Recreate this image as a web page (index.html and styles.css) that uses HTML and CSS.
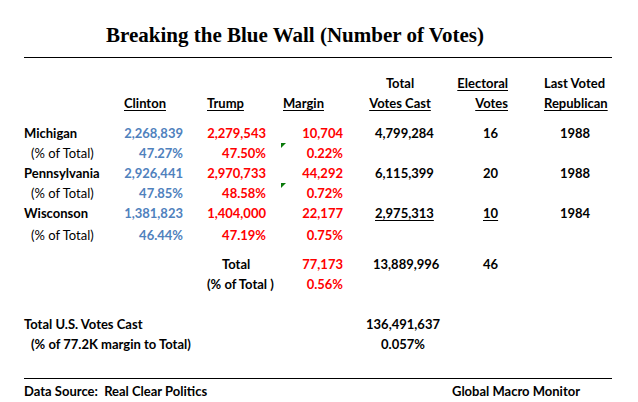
FILE: index.html
```html
<!DOCTYPE html>
<html lang="en">
<head>
<meta charset="utf-8">
<title>Breaking the Blue Wall</title>
<link rel="stylesheet" href="styles.css">
</head>
<body>
<div class="page">
  <h1 class="title">Breaking the Blue Wall (Number of Votes)</h1>
  <div class="rule rule-top"></div>

  <div class="row head1">
    <span class="e hc">Total</span>
    <span class="f hr"><u>Electoral</u></span>
    <span class="g hl">Last Voted</span>
  </div>
  <div class="row head2">
    <span class="b hb"><u>Clinton</u></span>
    <span class="c hc3"><u>Trump</u></span>
    <span class="d hd"><u>Margin</u></span>
    <span class="e hc"><u>Votes Cast</u></span>
    <span class="f hr"><u>Votes</u></span>
    <span class="g hl"><u>Republican</u></span>
  </div>

  <div class="row first">
    <span class="a">Michigan</span>
    <span class="b num blue">2,268,839</span>
    <span class="c num red">2,279,543</span>
    <span class="d num red">10,704</span>
    <span class="e vl">4,799,284</span>
    <span class="f vev">16</span>
    <span class="g vy">1988</span>
  </div>
  <div class="row">
    <span class="a sub reg">(% of Total)</span>
    <span class="b num blue">47.27%</span>
    <span class="c num red">47.50%</span>
    <span class="d num red flag">0.22%</span>
  </div>
  <div class="row">
    <span class="a">Pennsylvania</span>
    <span class="b num blue">2,926,441</span>
    <span class="c num red">2,970,733</span>
    <span class="d num red">44,292</span>
    <span class="e vl">6,115,399</span>
    <span class="f vev">20</span>
    <span class="g vy">1988</span>
  </div>
  <div class="row">
    <span class="a sub reg">(% of Total)</span>
    <span class="b num blue">47.85%</span>
    <span class="c num red">48.58%</span>
    <span class="d num red flag">0.72%</span>
  </div>
  <div class="row tall">
    <span class="a">Wisconson</span>
    <span class="b num blue">1,381,823</span>
    <span class="c num red">1,404,000</span>
    <span class="d num red">22,177</span>
    <span class="e vl"><u>2,975,313</u></span>
    <span class="f vev"><u>10</u></span>
    <span class="g vy">1984</span>
  </div>
  <div class="row">
    <span class="a sub reg">(% of Total)</span>
    <span class="b num blue">46.44%</span>
    <span class="c num red">47.19%</span>
    <span class="d num red">0.75%</span>
  </div>

  <div class="row totals">
    <span class="c tl">Total</span>
    <span class="d num red">77,173</span>
    <span class="e vl vl2">13,889,996</span>
    <span class="f vev">46</span>
  </div>
  <div class="row">
    <span class="c tl tl2">(% of Total )</span>
    <span class="d num red">0.56%</span>
  </div>

  <div class="row us">
    <span class="wide">Total U.S. Votes Cast</span>
    <span class="e vc">136,491,637</span>
  </div>
  <div class="row">
    <span class="wide sub">(% of 77.2K margin to Total)</span>
    <span class="e vc">0.057%</span>
  </div>

  <div class="rule rule-bottom"></div>
  <div class="footer">
    <span class="src">Data Source:  Real Clear Politics</span>
    <span class="brand">Global Macro Monitor</span>
  </div>
</div>
</body>
</html>
```

FILE: styles.css
```css
html, body {
  margin: 0;
  padding: 0;
  background: #ffffff;
}

body {
  font-family: "Lato", "Open Sans", sans-serif;
  font-weight: 700;
  font-size: 13px;
  color: #000000;
}

.page {
  width: 588px;
  margin-left: 24px;
  padding-top: 20px;
}

.title {
  margin: 0;
  padding-left: 82px;
  font-family: "Liberation Serif", "Times New Roman", serif;
  font-weight: 700;
  font-size: 21px;
  line-height: 30px;
  color: #000000;
}

.rule {
  height: 1px;
  background: #000000;
}

.rule-top {
  margin-top: 7px;
}

.row {
  display: grid;
  grid-template-columns: 96px 70px 80px 80px 100px 70px 92px;
  height: 20px;
  line-height: 20px;
  white-space: nowrap;
}

u {
  text-decoration: underline;
  text-decoration-thickness: 1px;
  text-underline-offset: 2px;
}

.head1 { margin-top: 15px; }
.first { margin-top: 10px; }
.tall { height: 22px; line-height: 20px; }
.totals { margin-top: 9px; }
.us { margin-top: 20px; }

.a { grid-column: 1; }
.b { grid-column: 2; }
.c { grid-column: 3; }
.d { grid-column: 4; }
.e { grid-column: 5; }
.f { grid-column: 6; }
.g { grid-column: 7; }
.wide { grid-column: 1 / 5; }

.sub { padding-left: 7px; }
.reg { font-weight: 400; }

.blue { color: #4f81bd; }
.red { color: #ff0000; }

.num { text-align: right; }
.b.num { padding-right: 7px; }
.c.num { padding-right: 4px; }
.d.num { padding-right: 7px; }

.hb { padding-left: 4px; }
.hc3 { padding-left: 17px; }
.hd { padding-left: 13px; }
.hc { text-align: center; }
.hr { text-align: right; padding-right: 12px; }
.hl { padding-left: 24px; }

.vl { padding-left: 25px; }
.vl2 { padding-left: 23px; }
.vc { text-align: center; padding-left: 6px; }
.vev { padding-left: 33px; }
.vy { padding-left: 40px; }

.tl { padding-left: 32px; }
.tl2 { padding-left: 17px; }

.flag { position: relative; }
.flag::before {
  content: "";
  position: absolute;
  left: 11px;
  top: 0;
  width: 0;
  height: 0;
  border-top: 5px solid #0a7a0a;
  border-right: 5px solid transparent;
}

.rule-bottom {
  margin-top: 24px;
}

.footer {
  display: flex;
  height: 20px;
  line-height: 20px;
  margin-top: 2px;
  padding-right: 32px;
}

.src {
  white-space: pre;
}

.brand {
  margin-left: auto;
}
```
